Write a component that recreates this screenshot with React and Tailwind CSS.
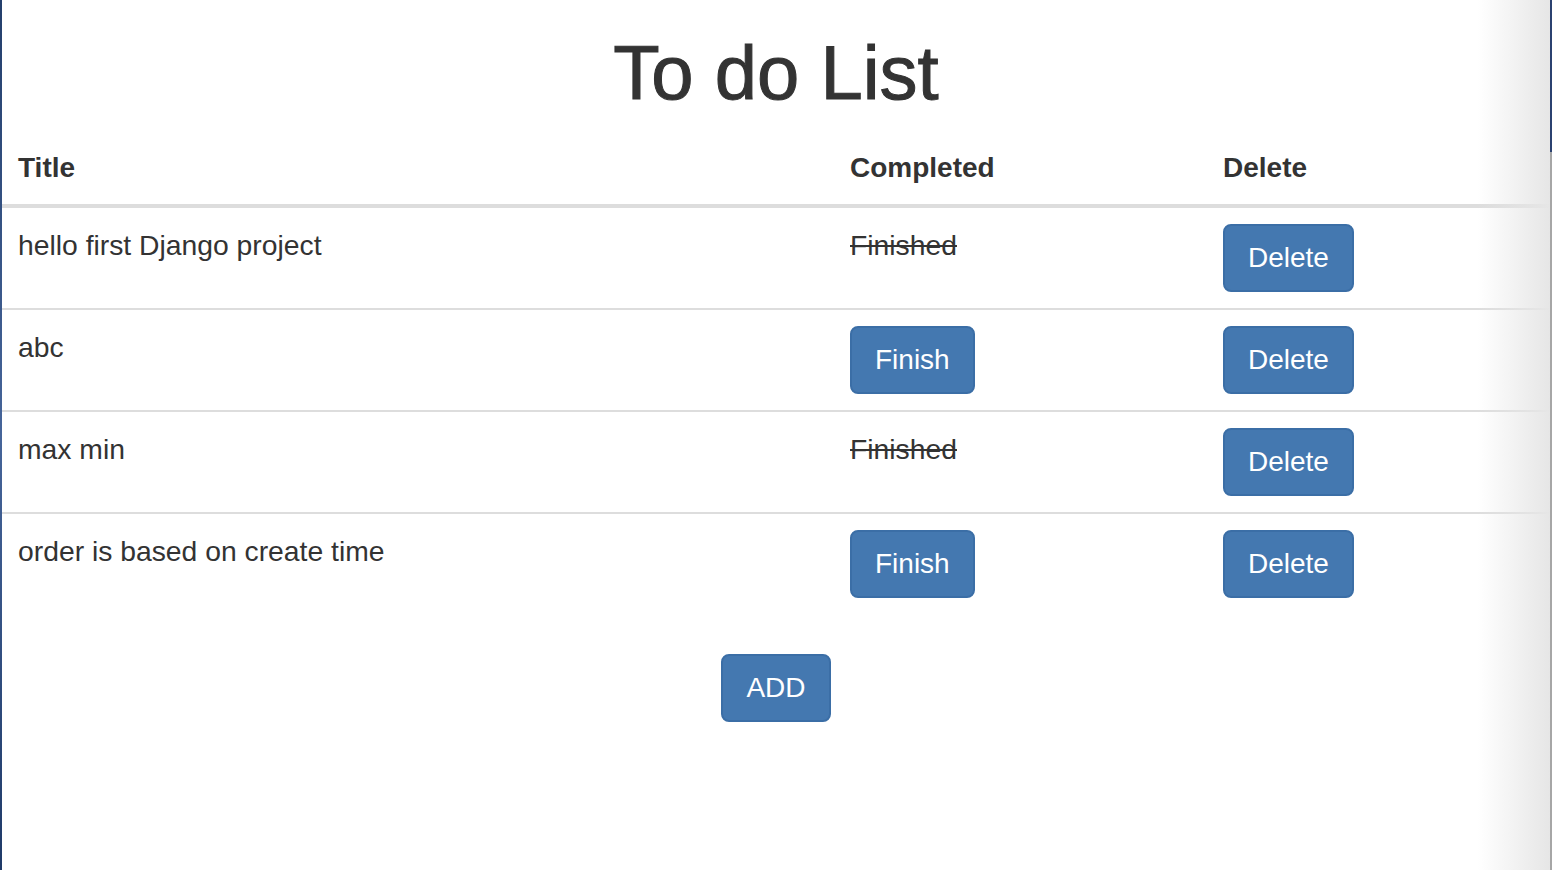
import React from "react";

const rows = [
  { title: "hello first Django project", done: true },
  { title: "abc", done: false },
  { title: "max min", done: true },
  { title: "order is based on create time", done: false },
];

function Btn({ children }) {
  return (
    <button className="h-[68px] rounded-[8px] border-2 border-[#3b6ea6] bg-[#4478b0] px-[23px] text-[28px] leading-[40px] text-white">
      {children}
    </button>
  );
}

export default function App() {
  return (
    <div
      className="relative flex h-[870px] w-[1552px] overflow-hidden bg-white text-[#333333]"
      style={{ fontFamily: '"Liberation Sans", Arial, sans-serif' }}
    >
      <div className="w-[2px] shrink-0 bg-gradient-to-b from-[#243f6c] via-[#46659a] to-[#1f3a68]" />
      <main className="flex w-[1548px] shrink-0 flex-col">
        <h1 className="mt-[33px] mb-[20px] text-center text-[76px] leading-[79px] font-normal [-webkit-text-stroke:1px_#333333]">
          To do List
        </h1>
        <div className="grid grid-cols-[832px_373px_343px] border-b-4 border-[#dddddd] text-[28px] leading-[40px] font-bold">
          <div className="p-[16px]">Title</div>
          <div className="p-[16px]">Completed</div>
          <div className="p-[16px]">Delete</div>
        </div>
        {rows.map((r, i) => (
          <div
            key={i}
            className={
              "grid grid-cols-[832px_373px_343px] text-[28.3px] leading-[40px] " +
              (i > 0 ? "border-t-2 border-[#dddddd]" : "")
            }
          >
            <div className="pt-[17px] px-[16px] pb-[15px]">{r.title}</div>
            <div className="p-[16px]">
              {r.done ? <span className="relative top-[1px] line-through">Finished</span> : <Btn>Finish</Btn>}
            </div>
            <div className="p-[16px]">
              <Btn>Delete</Btn>
            </div>
          </div>
        ))}
        <div className="mt-[40px] flex justify-center">
          <Btn>ADD</Btn>
        </div>
      </main>
      <div className="flex w-[2px] shrink-0 flex-col">
        <div className="h-[152px] bg-[#2b4170]" />
        <div className="flex-1 bg-[#a6a6a6]" />
      </div>
      <div className="pointer-events-none absolute top-0 right-[2px] h-full w-[72px] bg-gradient-to-r from-[#ffffff00] to-[#e6e6e6]" />
    </div>
  );
}
